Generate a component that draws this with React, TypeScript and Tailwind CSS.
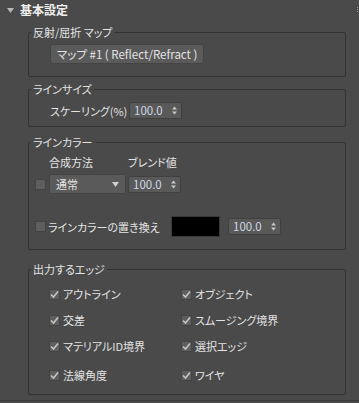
import React from "react";

const font = { fontFamily: '"Noto Sans CJK JP", "Liberation Sans", sans-serif' };

function Spinner({ className = "" }: { className?: string }) {
  return (
    <div className={`flex items-center h-[17px] w-[53px] bg-[#595959] border border-[#404040] rounded-[2px] pl-[4px] pr-[4px] ${className}`}>
      <span className="flex-1 text-[11.5px] leading-[15px] text-[#d2d8e6]">100.0</span>
      <svg width="5" height="9" viewBox="0 0 5 9">
        <path d="M0 3.5 L2.5 0.5 L5 3.5 Z" fill="#c8c8c8" />
        <path d="M0 5.5 L2.5 8.5 L5 5.5 Z" fill="#c8c8c8" />
      </svg>
    </div>
  );
}

function Check({ checked }: { checked?: boolean }) {
  return (
    <div className="w-[11px] h-[11px] bg-[#5e5e5e] border border-[#444] flex items-center justify-center shrink-0">
      {checked && (
        <svg width="9" height="9" viewBox="0 0 9 9">
          <path d="M1 4.5 L3.5 7 L8 1.5" stroke="#c4c4c4" strokeWidth="1.6" fill="none" />
        </svg>
      )}
    </div>
  );
}

function Group({ label, className = "", children }: { label: string; className?: string; children: React.ReactNode }) {
  return (
    <fieldset className={`ml-[28px] w-[318px] border border-[#333] rounded-[2px] ${className}`}>
      <legend className="ml-[2px] px-[2px] text-[11px] leading-[14px] text-[#e4e4e4] whitespace-nowrap">{label}</legend>
      {children}
    </fieldset>
  );
}

function Item({ label }: { label: string }) {
  return (
    <div className="flex items-center h-[14px]">
      <Check checked />
      <span className="ml-[3px] text-[11px] leading-[14px] text-[#e4e4e4] whitespace-nowrap">{label}</span>
    </div>
  );
}

export default function App() {
  return (
    <div
      className="relative w-[359px] h-[403px] bg-[#4a4a4a] text-[#e4e4e4] overflow-hidden [font-feature-settings:'palt'] whitespace-nowrap"
      style={font}
    >
      <div className="flex items-center h-[20px] pl-[7px]">
        <svg width="7" height="5" viewBox="0 0 7 5">
          <path d="M0 0 L7 0 L3.5 5 Z" fill="#b8b8b8" />
        </svg>
        <span className="ml-[6px] text-[12px] font-bold leading-[14px] text-[#f0f0f0]">基本設定</span>
      </div>

      <Group label="反射/屈折 マップ" className="mt-[5px] pt-[5px] pb-[12px]">
        <div className="pl-[21px]">
          <div className="flex items-center h-[20px] w-[154px] bg-[#5a5a5a] border border-[#444] rounded-[3px] pl-[6px] text-[11.5px] leading-[14px] text-[#e4e4e4]">
            マップ #1 ( Reflect/Refract )
          </div>
        </div>
      </Group>

      <Group label="ラインサイズ" className="mt-[5px] pt-[6px] pb-[7px]">
        <div className="flex items-center pl-[21px]">
          <span className="text-[11px] leading-[14px] w-[79px] shrink-0">スケーリング(%)</span>
          <Spinner />
        </div>
      </Group>

      <Group label="ラインカラー" className="mt-[8px] pt-[6px] pb-[12px]">
        <div className="flex pl-[20px] h-[14px] text-[11px] leading-[14px]">
          <span className="w-[79px]">合成方法</span>
          <span>ブレンド値</span>
        </div>
        <div className="flex items-center mt-[5px] pl-[6px]">
          <Check />
          <div className="ml-[3px] flex items-center h-[20px] w-[77px] bg-[#5a5a5a] border border-[#444] rounded-[2px] pl-[6px] pr-[6px]">
            <span className="flex-1 text-[11px] leading-[14px]">通常</span>
            <svg width="7" height="5" viewBox="0 0 7 5">
              <path d="M0 0 L7 0 L3.5 5 Z" fill="#d0d0d0" />
            </svg>
          </div>
          <Spinner className="ml-[2px]" />
        </div>
        <div className="flex items-center mt-[22px] pl-[6px] h-[21px]">
          <Check />
          <span className="ml-[2px] text-[11px] leading-[14px] w-[123px] shrink-0">ラインカラーの置き換え</span>
          <div className="w-[49px] h-[21px] bg-black border border-[#3a3a3a]" />
          <Spinner className="ml-[8px]" />
        </div>
      </Group>

      <Group label="出力するエッジ" className="mt-[12px] pt-[11px] pb-[12px]">
        <div className="grid grid-cols-[132px_1fr] pl-[20px] gap-y-[12px]">
          <Item label="アウトライン" />
          <Item label="オブジェクト" />
          <Item label="交差" />
          <Item label="スムージング境界" />
          <Item label="マテリアルID境界" />
          <Item label="選択エッジ" />
          <div className="mt-[3px]"><Item label="法線角度" /></div>
          <div className="mt-[3px]"><Item label="ワイヤ" /></div>
        </div>
      </Group>

      <div className="absolute left-0 right-0 top-[400px] h-px bg-[#3a3a3a]" />
      <div className="absolute right-[1px] top-[7px] flex flex-col gap-[1px]">
        <div className="w-px h-px bg-[#9a9a9a]" />
        <div className="w-px h-px bg-[#9a9a9a]" />
        <div className="w-px h-px bg-[#9a9a9a]" />
      </div>
    </div>
  );
}
